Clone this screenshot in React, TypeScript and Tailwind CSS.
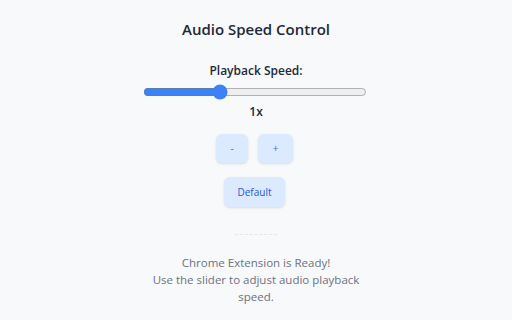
import React, { useState } from 'react';

const App: React.FC = () => {
  const [speed, setSpeed] = useState(1);

  const step = (delta: number) => {
    setSpeed(prev => Math.min(2, Math.max(0.5, Math.round((prev + delta) * 100) / 100)));
  };

  return (
    <div
      className="min-h-screen w-full bg-[#f8f9fb] text-[#1f2937] flex flex-col items-center pt-[17px]"
      style={{ fontFamily: '"Open Sans", "Noto Sans", sans-serif' }}
    >
      <h1 className="text-[15px] leading-[24px] font-semibold text-[#1f2937]">Audio Speed Control</h1>

      <label htmlFor="speed" className="mt-[21px] text-[12px] leading-[18px] font-semibold text-[#1f2937]">
        Playback Speed:
      </label>

      <input
        id="speed"
        type="range"
        min={0.5}
        max={2}
        step={0.05}
        value={speed}
        onChange={e => setSpeed(parseFloat(e.target.value))}
        className="mt-[4px] -ml-[3px] w-[224px] h-[16px] accent-[#3b82f6]"
      />

      <div className="mt-[3px] text-[12px] leading-[18px] font-semibold text-[#1f2937]">{speed}x</div>

      <div className="mt-[13px] -ml-[3px] flex gap-[10px]">
        <button
          onClick={() => step(-0.25)}
          className="w-[32px] h-[29px] rounded-[6px] bg-[#dbeafe] text-[#4f6fd8] text-[10px] shadow-sm"
        >
          -
        </button>
        <button
          onClick={() => step(0.25)}
          className="w-[35px] h-[29px] rounded-[6px] bg-[#dbeafe] text-[#4f6fd8] text-[10px] shadow-sm"
        >
          +
        </button>
      </div>

      <button
        onClick={() => setSpeed(1)}
        className="mt-[14px] -ml-[3px] w-[61px] h-[30px] rounded-[6px] bg-[#dbeafe] text-[#2b55d6] text-[10px] shadow-sm"
      >
        Default
      </button>

      <div className="mt-[27px] w-[42px] border-t border-dashed border-[#e2e5ea]" />

      <div className="mt-[19px] text-center text-[11.5px] leading-[17px] text-[#6b7280]">
        <p>Chrome Extension is Ready!</p>
        <p className="w-[215px]">Use the slider to adjust audio playback speed.</p>
      </div>
    </div>
  );
};

export default App;
